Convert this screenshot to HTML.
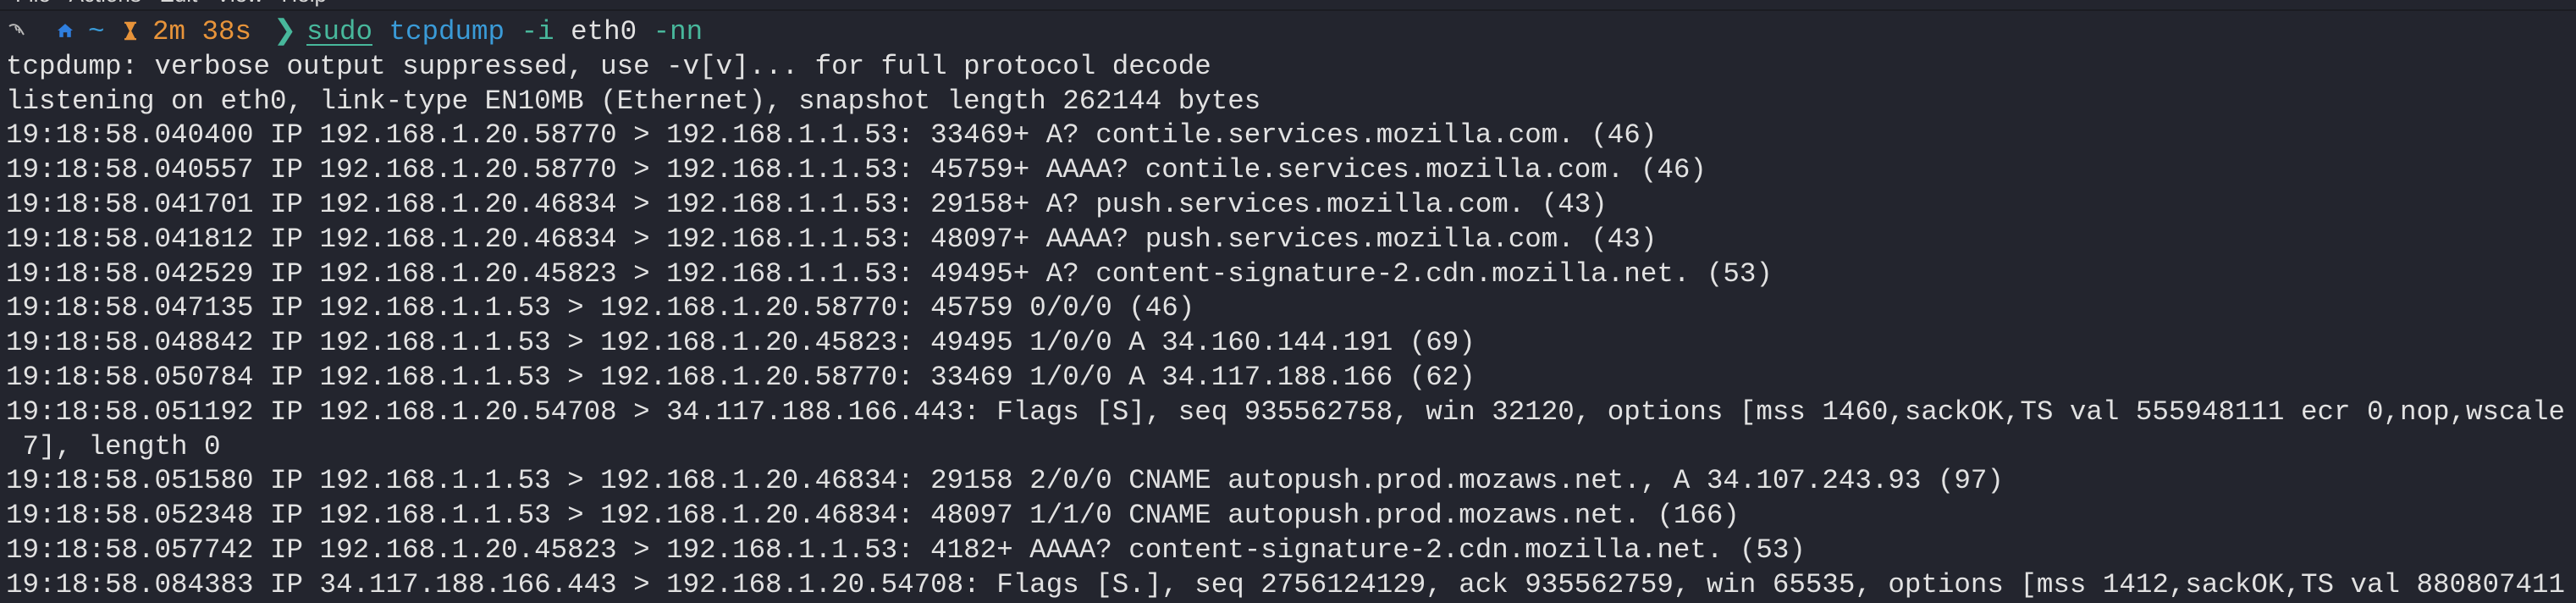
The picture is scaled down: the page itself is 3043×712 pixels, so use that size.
<!DOCTYPE html>
<html><head><meta charset="utf-8"><style>
html,body{margin:0;padding:0;background:#23252e;width:3043px;height:707px;overflow:hidden}
.menu{position:absolute;left:0;top:0;width:3043px;height:11px;background:#23252e;border-bottom:2px solid #1b1c22;overflow:hidden}
.menu span{position:absolute;top:-22px;font:26px "Liberation Sans",sans-serif;color:#d8d8d8;white-space:pre}
.term{position:absolute;left:7px;top:18px;font-family:"Liberation Mono",monospace;font-size:32.5px;line-height:40.8px;color:#e2e2e2}
.row{height:40.8px;position:relative;white-space:pre}
.o{color:#e8943a}.t{color:#48b89c}.b{color:#3a9bd8}
.u{text-decoration:underline;text-decoration-thickness:2px;text-underline-offset:6px}
</style></head><body>
<div class="menu"><span style="left:18px">File&nbsp;&nbsp;&nbsp;Actions&nbsp;&nbsp;&nbsp;Edit&nbsp;&nbsp;&nbsp;View&nbsp;&nbsp;&nbsp;Help</span></div>
<div class="term"><div class="row"><svg style="position:absolute;left:3px;top:10px" width="22" height="16" viewBox="0 0 22 16"><path d="M1 3 C5 0 9 1 12 4 L15 8 L18 13 M8 3 L10 8 M12 6 L13 11" stroke="#b8b8b8" stroke-width="2" fill="none"/></svg><svg style="position:absolute;left:61px;top:10px" width="18" height="16" viewBox="0 0 16 14"><path d="M8 0 L16 7 L14 7 L14 14 L10 14 L10 9 L6 9 L6 14 L2 14 L2 7 L0 7 Z" fill="#2f7fe0"/></svg><span style="position:absolute;left:97px;top:0" class="b">~</span><svg style="position:absolute;left:140px;top:7px" width="14" height="23" viewBox="0 0 13 20"><path d="M0 1 H13 M0 19 H13 M2 1 L11 1 L6.5 10 Z M6.5 10 L2 19 L11 19 Z" stroke="#e8943a" stroke-width="2" fill="#e8943a"/></svg><span style="position:absolute;left:173px;top:0" class="o">2m 38s</span><span style="position:absolute;left:316px;top:0" class="t">❯</span><span style="position:absolute;left:355px;top:0"><span class="t u">sudo</span> <span class="b">tcpdump</span> <span class="t">-i</span> eth0 <span class="t">-nn</span></span></div><div class="row">tcpdump: verbose output suppressed, use -v[v]... for full protocol decode</div><div class="row">listening on eth0, link-type EN10MB (Ethernet), snapshot length 262144 bytes</div><div class="row">19:18:58.040400 IP 192.168.1.20.58770 &gt; 192.168.1.1.53: 33469+ A? contile.services.mozilla.com. (46)</div><div class="row">19:18:58.040557 IP 192.168.1.20.58770 &gt; 192.168.1.1.53: 45759+ AAAA? contile.services.mozilla.com. (46)</div><div class="row">19:18:58.041701 IP 192.168.1.20.46834 &gt; 192.168.1.1.53: 29158+ A? push.services.mozilla.com. (43)</div><div class="row">19:18:58.041812 IP 192.168.1.20.46834 &gt; 192.168.1.1.53: 48097+ AAAA? push.services.mozilla.com. (43)</div><div class="row">19:18:58.042529 IP 192.168.1.20.45823 &gt; 192.168.1.1.53: 49495+ A? content-signature-2.cdn.mozilla.net. (53)</div><div class="row">19:18:58.047135 IP 192.168.1.1.53 &gt; 192.168.1.20.58770: 45759 0/0/0 (46)</div><div class="row">19:18:58.048842 IP 192.168.1.1.53 &gt; 192.168.1.20.45823: 49495 1/0/0 A 34.160.144.191 (69)</div><div class="row">19:18:58.050784 IP 192.168.1.1.53 &gt; 192.168.1.20.58770: 33469 1/0/0 A 34.117.188.166 (62)</div><div class="row">19:18:58.051192 IP 192.168.1.20.54708 &gt; 34.117.188.166.443: Flags [S], seq 935562758, win 32120, options [mss 1460,sackOK,TS val 555948111 ecr 0,nop,wscale</div><div class="row"> 7], length 0</div><div class="row">19:18:58.051580 IP 192.168.1.1.53 &gt; 192.168.1.20.46834: 29158 2/0/0 CNAME autopush.prod.mozaws.net., A 34.107.243.93 (97)</div><div class="row">19:18:58.052348 IP 192.168.1.1.53 &gt; 192.168.1.20.46834: 48097 1/1/0 CNAME autopush.prod.mozaws.net. (166)</div><div class="row">19:18:58.057742 IP 192.168.1.20.45823 &gt; 192.168.1.1.53: 4182+ AAAA? content-signature-2.cdn.mozilla.net. (53)</div><div class="row">19:18:58.084383 IP 34.117.188.166.443 &gt; 192.168.1.20.54708: Flags [S.], seq 2756124129, ack 935562759, win 65535, options [mss 1412,sackOK,TS val 880807411</div></div>
</body></html>
